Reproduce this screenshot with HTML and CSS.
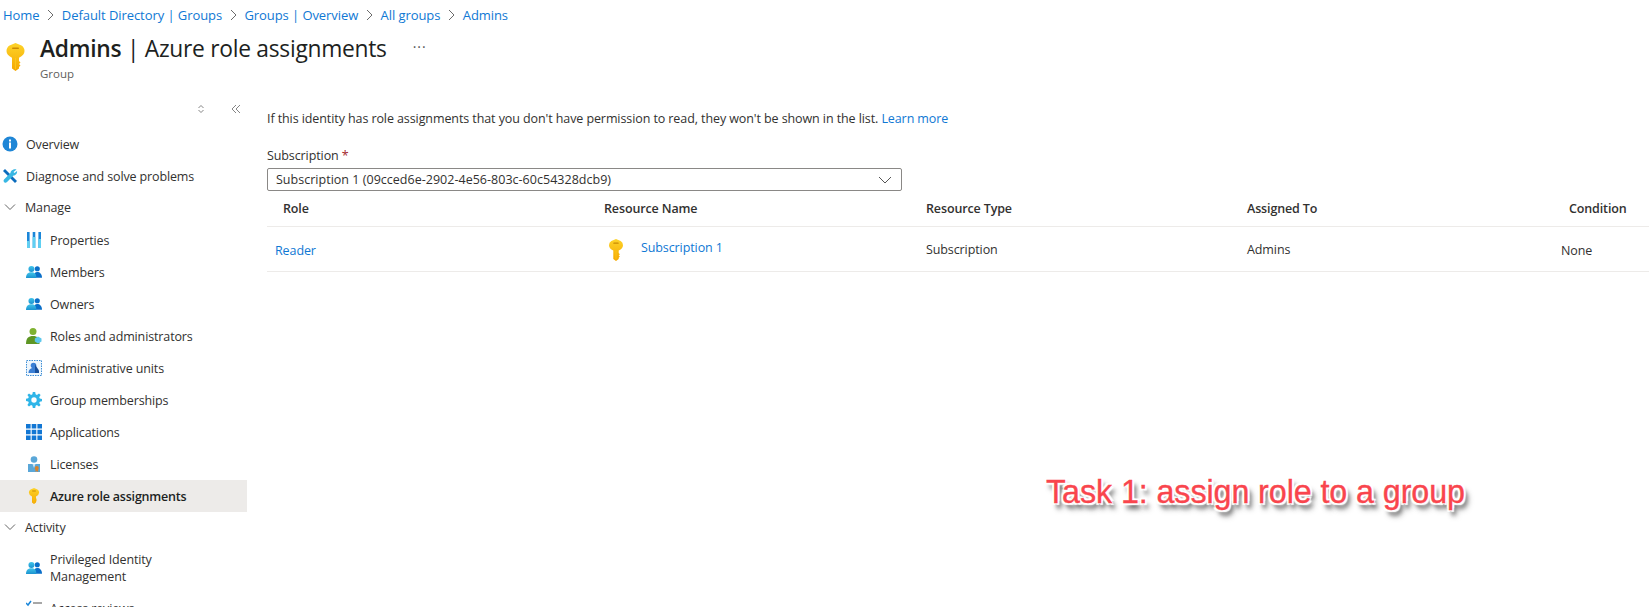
FILE: index.html
```html
<!DOCTYPE html>
<html lang="en">
<head>
<meta charset="utf-8">
<title>Admins | Azure role assignments</title>
<link rel="stylesheet" href="styles.css">
</head>
<body>
<svg class="defs" width="0" height="0" aria-hidden="true">
  <defs>
    <linearGradient id="gold" x1="0" y1="0" x2="0" y2="1"><stop offset="0" stop-color="#fdd32a"/><stop offset="1" stop-color="#f5a800"/></linearGradient>
    <linearGradient id="sky" x1="0" y1="0" x2="0" y2="1"><stop offset="0" stop-color="#41c4ea"/><stop offset="1" stop-color="#1b93d0"/></linearGradient>
    <symbol id="key" viewBox="0 0 18 28">
      <path fill="url(#gold)" d="M9 0 L15 2.500 Q18 4.500 18 8 Q18 12 12.500 14.800 V18 L14 19.500 L12.500 21 L14 22.500 L12.500 24 V25.500 L9 28 L5.500 25.500 V14.800 Q0 12 0 8 Q0 4.500 3 2.500Z"/>
      <rect x="5.500" y="4.500" width="7" height="1.600" rx=".8" fill="#c98a05"/>
      <path d="M9 15 V26" stroke="#fbc61c" stroke-width="1"/>
    </symbol>
    <symbol id="people" viewBox="0 0 17 13">
      <circle cx="12" cy="3" r="2.700" fill="#0a6fc9"/>
      <path fill="#0a6fc9" d="M8 12.500 C8 8.500 9.500 6.500 12 6.500 C14.500 6.500 17 8.500 17 12.500Z"/>
      <circle cx="5.800" cy="3.300" r="3.200" fill="url(#sky)"/>
      <path fill="url(#sky)" d="M0 12.800 C0 8.500 2.500 6.800 5.800 6.800 C9 6.800 11 8.500 11 12.800Z"/>
    </symbol>
    <symbol id="crumb-sep" viewBox="0 0 7 12">
      <path d="M1 1 6 6 1 11" fill="none" stroke="#6b6b6b" stroke-width="1"/>
    </symbol>
  </defs>
</svg>

<nav class="crumbs">
  <a>Home</a><svg class="sep"><use href="#crumb-sep"/></svg>
  <a>Default Directory | Groups</a><svg class="sep"><use href="#crumb-sep"/></svg>
  <a>Groups | Overview</a><svg class="sep"><use href="#crumb-sep"/></svg>
  <a>All groups</a><svg class="sep"><use href="#crumb-sep"/></svg>
  <a>Admins</a>
</nav>

<header class="head">
  <svg class="head-key"><use href="#key"/></svg>
  <div class="head-text">
    <h1 class="title"><b>Admins</b> | Azure role assignments</h1>
    <div class="sub">Group</div>
  </div>
  <span class="more">···</span>
</header>

<div class="body">
  <aside class="side">
    <div class="side-tools">
      <svg class="tool" viewBox="0 0 10 10"><path d="M2.500 4 5 1.500 7.500 4M2.500 6 5 8.500 7.500 6" fill="none" stroke="#777" stroke-width=".9"/></svg>
      <svg class="tool" viewBox="0 0 10 10"><path d="M5 1 1 5l4 4M9 1 5 5l4 4" fill="none" stroke="#777" stroke-width=".9"/></svg>
    </div>

    <div class="item top">
      <svg class="ic-top" viewBox="0 0 16 16"><circle cx="8" cy="8" r="7.500" fill="#1f86d6"/><rect x="7" y="6.500" width="2" height="6" fill="#fff"/><rect x="7" y="3.500" width="2" height="2" fill="#fff"/></svg>
      <span>Overview</span>
    </div>
    <div class="item top">
      <svg class="ic-top" viewBox="0 0 16 16"><path d="M3 1 15 13l-2 2L1 3Z" fill="#0b6cbd"/><path d="M14.500 1.500 11.500 4l1 1 2.500-2c.5 2-1 4.500-3.500 4.500L5 14a1.800 1.800 0 0 1-3-2.500L8.500 5C8.500 2.500 12 .5 14.500 1.500Z" fill="#39b7e3"/></svg>
      <span>Diagnose and solve problems</span>
    </div>
    <div class="item top short">
      <svg class="chev" viewBox="0 0 12 8"><path d="M1 1.500 6 6.500 11 1.500" fill="none" stroke="#666" stroke-width="1"/></svg>
      <span>Manage</span>
    </div>

    <div class="item sub-item">
      <svg class="ic" viewBox="0 0 16 16"><path fill="#1a86d9" d="M1 0h2.600v16H1zM6.700 0h2.600v16H6.700zM12.400 0H15v16h-2.600z"/><path fill="#5fd0f2" d="M1 9h2.600v7H1zM6.700 5h2.600v11H6.700zM12.400 7H15v9h-2.600z"/></svg>
      <span>Properties</span>
    </div>
    <div class="item sub-item"><svg class="ic"><use href="#people"/></svg><span>Members</span></div>
    <div class="item sub-item"><svg class="ic"><use href="#people"/></svg><span>Owners</span></div>
    <div class="item sub-item">
      <svg class="ic" viewBox="0 0 16 16"><circle cx="7" cy="3.500" r="3.500" fill="#7fb231"/><path fill="#5e9624" d="M0 16c0-6 2.500-8 7-8s6.500 2 6.500 8Z"/><path fill="#5dc8ec" d="M12 8.500 15.500 10.500v3L12 15.500 8.800 13.500v-3Z"/></svg>
      <span>Roles and administrators</span>
    </div>
    <div class="item sub-item">
      <svg class="ic" viewBox="0 0 16 16"><rect x=".5" y=".5" width="15" height="15" fill="#eef6fc" stroke="#3f8fd6" stroke-dasharray="1.500 1"/><circle cx="7.500" cy="5.500" r="2.800" fill="#3a7fd5"/><path fill="#3a7fd5" d="M2.500 13c0-3.500 2-5 5-5s4 1.500 4 5Z"/><path fill="#174f9c" d="M9 4.500l4 6v2.500H9Z"/></svg>
      <span>Administrative units</span>
    </div>
    <div class="item sub-item">
      <svg class="ic" viewBox="0 0 16 16"><path fill="#2fb5e8" d="M6.800 0h2.400l.4 2.300 1.300.6L13 1.500l1.600 1.600-1.400 2.100.6 1.300 2.200.4v2.400l-2.200.4-.6 1.300 1.400 2.100L13 14.500l-2.100-1.400-1.300.6-.4 2.300H6.800l-.4-2.300-1.300-.6L3 14.500l-1.600-1.600 1.400-2.100-.6-1.300L0 9.100V6.700l2.200-.4.6-1.300L1.400 3.100 3 1.500l2.100 1.400 1.300-.6Z"/><circle cx="8" cy="8" r="2.700" fill="#fff"/></svg>
      <span>Group memberships</span>
    </div>
    <div class="item sub-item">
      <svg class="ic" viewBox="0 0 16 16"><path fill="#1277d4" d="M0 0h4.600v4.600H0zM5.700 0h4.600v4.600H5.700zM11.400 0H16v4.600h-4.600zM0 5.700h4.600v4.600H0zM5.700 5.700h4.600v4.600H5.700zM11.400 5.700H16v4.600h-4.600zM0 11.400h4.600V16H0zM5.700 11.400h4.600V16H5.700zM11.400 11.400H16V16h-4.600z"/></svg>
      <span>Applications</span>
    </div>
    <div class="item sub-item">
      <svg class="ic" viewBox="0 0 16 16"><circle cx="8" cy="3.500" r="3.300" fill="#5aa7d8"/><path fill="#5aa7d8" d="M2 16V8h12v8Z"/><path fill="#cfe6f5" d="M6.500 8h3L8 12Z"/><circle cx="10.800" cy="12" r="2" fill="#d9822b"/><path fill="#d9822b" d="M9.500 13h2.600v3L10.800 15l-1.300 1Z"/></svg>
      <span>Licenses</span>
    </div>
    <div class="item sub-item active"><svg class="ic key-ic"><use href="#key"/></svg><span>Azure role assignments</span></div>
    <div class="item top short">
      <svg class="chev" viewBox="0 0 12 8"><path d="M1 1.500 6 6.500 11 1.500" fill="none" stroke="#666" stroke-width="1"/></svg>
      <span>Activity</span>
    </div>
    <div class="item sub-item tall"><svg class="ic"><use href="#people"/></svg><span>Privileged Identity<br>Management</span></div>
    <div class="item sub-item">
      <svg class="ic" viewBox="0 0 16 16"><path d="M0 3l2 2 3-4" fill="none" stroke="#1a86d9" stroke-width="1.500"/><path d="M7 3h9M0 8h16M0 13h16" stroke="#8a8a8a" stroke-width="1.500"/></svg>
      <span>Access reviews</span>
    </div>
  </aside>

  <main class="main">
    <p class="info">If this identity has role assignments that you don't have permission to read, they won't be shown in the list. <a>Learn more</a></p>
    <label class="label">Subscription <span class="req">*</span></label>
    <div class="select">
      <span>Subscription 1 (09cced6e-2902-4e56-803c-60c54328dcb9)</span>
      <svg class="select-chev" viewBox="0 0 14 8"><path d="M1 1 7 7 13 1" fill="none" stroke="#555" stroke-width="1"/></svg>
    </div>

    <div class="grid head-row">
      <div class="col-role">Role</div>
      <div>Resource Name</div>
      <div>Resource Type</div>
      <div>Assigned To</div>
      <div>Condition</div>
    </div>
    <div class="grid data-row">
      <div class="cell-reader"><a>Reader</a></div>
      <div class="cell-res"><svg class="row-key"><use href="#key"/></svg><a>Subscription 1</a></div>
      <div class="cell-type">Subscription</div>
      <div class="cell-admin">Admins</div>
      <div class="cell-none">None</div>
    </div>

    <div class="note-wrap"><div class="note">Task 1: assign role to a group</div></div>
  </main>
</div>
</body>
</html>
```

FILE: styles.css
```css
* { box-sizing: border-box; }
html, body { height: 100%; }
body {
  margin: 0;
  height: 607px;
  overflow: hidden;
  background: #fff;
  color: #323130;
  font-family: "Open Sans", "Noto Sans", sans-serif;
  font-size: 13px;
}
a { color: #0f78d4; }
.defs { display: block; height: 0; }

.crumbs {
  display: flex;
  align-items: center;
  height: 30px;
  padding-left: 3px;
  font-size: 13px;
  letter-spacing: -.07px;
}
.sep { width: 7px; height: 12px; margin: 0 7.700px; flex: none; }

.head {
  display: flex;
  align-items: flex-start;
  height: 68px;
  padding-top: 6px;
}
.head-key { width: 19px; height: 28px; margin: 7px 0 0 6px; flex: none; }
.head-text { margin-left: 15px; flex: none; }
.title {
  margin: 0;
  font-size: 22.800px;
  font-weight: 400;
  line-height: 26px;
  color: #201f1e;
  letter-spacing: -.28px;
  white-space: nowrap;
}
.title b { font-weight: 600; }
.sub { margin-top: 4px; font-size: 11.500px; line-height: 16px; color: #605e5c; }
.more { margin: 1px 0 0 26px; font-size: 14px; line-height: 20px; letter-spacing: 1px; color: #555; }

.body { display: flex; height: 509px; overflow: hidden; }

.side { width: 247px; flex: none; }
.side-tools {
  display: flex;
  justify-content: flex-end;
  align-items: center;
  gap: 25px;
  height: 22px;
  padding-right: 6px;
  margin-bottom: 8px;
}
.tool { width: 10px; height: 10px; }
.item { display: flex; align-items: center; font-size: 12.500px; letter-spacing: -.13px; height: 32px; white-space: nowrap; }
.top { padding-left: 2px; }
.top span { margin-left: 8px; }
.short { padding-bottom: 2px; }
.ic-top { width: 16px; height: 16px; flex: none; }
.chev { width: 12px; height: 8px; margin: 0 1px 0 2px; flex: none; }
.sub-item { padding-left: 26px; }
.sub-item span { margin-left: 8px; line-height: 17px; }
.ic { width: 16px; height: 16px; flex: none; }
.key-ic { width: 12px; height: 16px; margin: 0 2px; }
.active { background: #edebe9; font-weight: 600; color: #201f1e; letter-spacing: -.2px; }
.tall { height: 48px; }

.main { flex: 1; min-width: 0; padding-left: 20px; }
.info { margin: 0; padding-top: 12px; line-height: 18px; font-size: 12.500px; letter-spacing: -.09px; white-space: nowrap; }
.label { display: block; margin-top: 19px; line-height: 18px; font-size: 12.500px; letter-spacing: -.1px; }
.req { color: #a4262c; }
.select {
  display: flex;
  align-items: center;
  justify-content: space-between;
  width: 635px;
  height: 23px;
  margin-top: 3px;
  padding: 0 8px;
  border: 1px solid #8a8886;
  border-radius: 2px;
  font-size: 12.500px;
  letter-spacing: .02px;
}
.select-chev { width: 14px; height: 8px; margin-right: 1px; }

.grid {
  display: grid;
  grid-template-columns: 337px 322px 321px 322px 80px;
  border-bottom: 1px solid #edebe9;
  font-size: 12.500px;
  letter-spacing: -.1px;
  white-space: nowrap;
}
.head-row { height: 36px; align-items: center; font-weight: 600; color: #323130; letter-spacing: -.13px; }
.col-role { padding-left: 16px; }
.data-row { height: 45px; align-items: center; }
.cell-reader { padding: 2px 0 0 8px; }
.cell-res { display: flex; align-items: center; margin-top: -3px; padding-left: 5px; }
.row-key { width: 14px; height: 22px; margin: 4px 18px 0 0; flex: none; }
.cell-admin { padding-top: 1px; }
.cell-none { margin-left: -8px; padding-top: 2px; }

.note-wrap { display: flex; justify-content: flex-start; padding: 201px 0 0 779px; }
.note {
  font-family: "Liberation Sans", Arial, sans-serif;
  font-size: 32.300px;
  line-height: 38px;
  color: #f9454d;
  -webkit-text-stroke: .35px #f9454d;
  white-space: nowrap;
  letter-spacing: -.1px;
  text-shadow:
    1px 0 1px #fff, -1px 0 1px #fff, 0 1px 1px #fff, 0 -1px 1px #fff,
    2px 2px 1px #fff, -2px -2px 1px #fff, 2px -2px 1px #fff, -2px 2px 1px #fff,
    3px 5px 4px rgba(0,0,0,.6), 4px 6px 6px rgba(0,0,0,.4);
}
```
